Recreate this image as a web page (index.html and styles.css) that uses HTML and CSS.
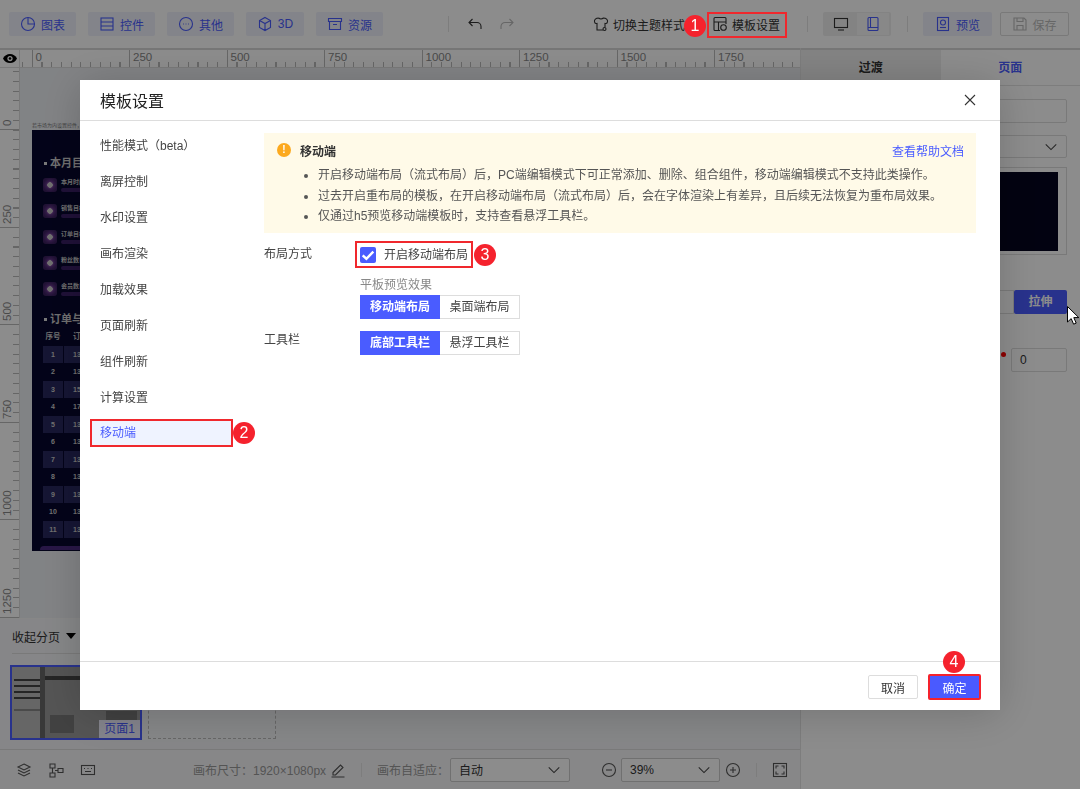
FILE: index.html
```html
<!DOCTYPE html>
<html lang="en">
<head>
    <meta charset="UTF-8">
    <meta name="viewport" content="width=device-width, initial-scale=1.0">
    <title>模板设置</title>
    <link rel="stylesheet" href="styles.css">
</head>
<body>
    <div class="app">
        <div class="toolbar">
            <div class="tool-group">
                <button class="tool-btn"><svg class="ico" viewBox="0 0 16 16"><circle cx="8" cy="8" r="6.5"/><path d="M8 1.5V8h6.5"/></svg>图表</button>
                <button class="tool-btn"><svg class="ico" viewBox="0 0 16 16"><rect x="2" y="2" width="12" height="12"/><path d="M2 6h12M2 10h12"/></svg>控件</button>
                <button class="tool-btn"><svg class="ico" viewBox="0 0 16 16"><circle cx="8" cy="8" r="6.5"/><path d="M5 8h.8M7.6 8h.8M10.2 8h.8"/></svg>其他</button>
                <button class="tool-btn"><svg class="ico" viewBox="0 0 16 16"><path d="M8 1.5l5.5 3v7L8 14.5l-5.500-3v-7zM2.500 4.500L8 7.500l5.500-3M8 7.500v7"/></svg>3D</button>
                <button class="tool-btn"><svg class="ico" viewBox="0 0 16 16"><path d="M1.500 2.500h13v3h-13zM2.500 5.500v8h11v-8M6 8.500h4"/></svg>资源</button>
            </div>
            <span class="tool-sep sep-history"></span>
            <svg class="ico history" viewBox="0 0 16 16"><path d="M5.500 3L2 6.500 5.500 10M2 6.500h8a4 4 0 0 1 4 4V13"/></svg>
            <svg class="ico history redo" viewBox="0 0 16 16"><path d="M10.500 3L14 6.500 10.500 10M14 6.500H6a4 4 0 0 0-4 4V13"/></svg>
            <div class="tool-link theme-link"><svg class="ico" viewBox="0 0 16 16"><path d="M5.500 2C3 2 1 3.800 1.500 5.800c.3 1.200 1.500 1.900 2.500 1.700v6.500h6M5.500 2c1.300 1 3.700 1 5 0 2.500 0 4.500 1.800 4 3.800-.3 1.200-1.500 1.900-2.500 1.700V11"/><circle cx="11.500" cy="13" r="1.500"/></svg>切换主题样式</div>
            <div class="tool-link template-link"><svg class="ico" viewBox="0 0 16 16"><path d="M14 8V2.500a1 1 0 0 0-1-1H3a1 1 0 0 0-1 1v11a1 1 0 0 0 1 1h5M2 6h12M6.500 6v8.500"/><circle cx="11.500" cy="11.500" r="2.800"/></svg>模板设置</div>
            <span class="tool-sep"></span>
            <div class="device-switch">
                <span class="device"><svg class="ico dark" viewBox="0 0 16 16"><rect x="1.500" y="2.500" width="13" height="9"/><path d="M5 14h6" /></svg></span>
                <span class="device active"><svg class="ico" viewBox="0 0 16 16"><rect x="3" y="1.500" width="10" height="13" rx="1"/><path d="M3 11.500h10M5.500 1.500v10"/></svg></span>
            </div>
            <span class="tool-sep"></span>
            <button class="tool-btn preview-btn"><svg class="ico" viewBox="0 0 16 16"><rect x="2.500" y="1.500" width="11" height="13"/><circle cx="8" cy="6.500" r="2.500"/><path d="M5 11.500h6"/></svg>预览</button>
            <button class="save-btn"><svg class="ico" viewBox="0 0 16 16"><path d="M2 2h10l2 2v10H2zM5 2v3.500h6V2M5 14V9.500h6V14"/></svg>保存</button>
        </div>

        <div class="main">
            <div class="editor">
                <div class="ruler-top">
                    <span class="ruler-corner"><svg viewBox="0 0 16 12" width="14" height="11"><path d="M0 6c3-7 13-7 16 0-3 7-13 7-16 0z" fill="#000"/><circle cx="8" cy="6" r="3" fill="#fff"/><circle cx="8" cy="6" r="1.500" fill="#000"/></svg></span>
                    <div class="ruler-scale">
                        <span class="mark">0</span><span class="mark">250</span><span class="mark">500</span><span class="mark">750</span><span class="mark">1000</span><span class="mark">1250</span><span class="mark">1500</span><span class="mark">1750</span>
                    </div>
                </div>
                <div class="workspace">
                    <div class="ruler-left">
                        <span class="mark-v">0</span><span class="mark-v">250</span><span class="mark-v">500</span><span class="mark-v">750</span><span class="mark-v">1000</span><span class="mark-v">1250</span>
                    </div>
                    <div class="stage">
                        <div class="stage-tip">若市场为内设置控件，即可查看</div>
                        <div class="board">
                            <div class="board-title">本月目标完成情况</div>
                            <div class="goal"><span class="goal-icon"></span><div class="goal-body"><span>本月时间进度</span><i></i></div></div>
                            <div class="goal"><span class="goal-icon"></span><div class="goal-body"><span>销售目标完成</span><i></i></div></div>
                            <div class="goal"><span class="goal-icon"></span><div class="goal-body"><span>订单目标完成</span><i></i></div></div>
                            <div class="goal"><span class="goal-icon"></span><div class="goal-body"><span>粉丝数目标</span><i></i></div></div>
                            <div class="goal"><span class="goal-icon"></span><div class="goal-body"><span>会员数目标</span><i></i></div></div>
                            <div class="board-title second">订单与会员</div>
                            <div class="table-head"><span class="col-no">序号</span><span>订单</span></div>
                            <div class="table-row odd"><span class="col-no">1</span><span>13</span></div>
                            <div class="table-row"><span class="col-no">2</span><span>13</span></div>
                            <div class="table-row odd"><span class="col-no">3</span><span>15</span></div>
                            <div class="table-row"><span class="col-no">4</span><span>17</span></div>
                            <div class="table-row odd"><span class="col-no">5</span><span>13</span></div>
                            <div class="table-row"><span class="col-no">6</span><span>13</span></div>
                            <div class="table-row odd"><span class="col-no">7</span><span>13</span></div>
                            <div class="table-row"><span class="col-no">8</span><span>13</span></div>
                            <div class="table-row odd"><span class="col-no">9</span><span>13</span></div>
                            <div class="table-row"><span class="col-no">10</span><span>13</span></div>
                            <div class="table-row odd"><span class="col-no">11</span><span>13</span></div>
                            <div class="board-foot"></div>
                        </div>
                    </div>
                </div>
                <div class="pages">
                    <div class="pages-head">收起分页<span class="caret"></span></div>
                    <div class="pages-list">
                        <div class="thumb">
                            <div class="thumb-side"><i></i><i></i><i></i><i></i><i class="pale"></i></div>
                            <div class="thumb-gap"></div>
                            <div class="thumb-main"><i></i></div>
                            <span class="thumb-block block-a"></span>
                            <span class="thumb-block block-b"></span>
                            <span class="thumb-label">页面1</span>
                        </div>
                        <div class="thumb-add"></div>
                    </div>
                </div>
                <div class="statusbar">
                    <svg class="ico gray" viewBox="0 0 16 16"><path d="M8 2l6 3-6 3-6-3zM2 8l6 3 6-3M2 11l6 3 6-3"/></svg>
                    <svg class="ico gray" viewBox="0 0 16 16"><path d="M2 2h5v4H2zM2 11h5v4H2zM10 6.500h5v4h-5zM4.500 6v5M7 8.500h3"/></svg>
                    <svg class="ico gray" viewBox="0 0 16 16"><rect x="1.500" y="3.500" width="13" height="9"/><path d="M4 6.500h1M7.500 6.500h1M11 6.500h1M5 9.500h6"/></svg>
                    <span class="canvas-size">画布尺寸：1920×1080px</span>
                    <svg class="ico gray pencil" viewBox="0 0 16 16"><path d="M3 10.500L10.500 3l2.500 2.500L5.500 13H3zM1.500 15h13"/></svg>
                    <span class="tool-sep small"></span>
                    <span class="fit-label">画布自适应：</span>
                    <div class="select fit-select"><span>自动</span><svg class="chev" viewBox="0 0 16 16"><path d="M2 5l6 6 6-6"/></svg></div>
                    <svg class="ico gray minus" viewBox="0 0 16 16"><circle cx="8" cy="8" r="6.500"/><path d="M5 8h6"/></svg>
                    <div class="select zoom-select"><span>39%</span><svg class="chev" viewBox="0 0 16 16"><path d="M2 5l6 6 6-6"/></svg></div>
                    <svg class="ico gray plus" viewBox="0 0 16 16"><circle cx="8" cy="8" r="6.500"/><path d="M5 8h6M8 5v6"/></svg>
                    <span class="tool-sep small"></span>
                    <svg class="ico gray" viewBox="0 0 16 16"><rect x="1.500" y="1.500" width="13" height="13"/><path d="M4 6.500V4h2.500M9.500 4H12v2.500M12 9.500V12H9.500M6.500 12H4V9.500"/></svg>
                </div>
            </div>

            <div class="side">
                <div class="side-tabs"><span class="side-tab">过渡</span><span class="side-tab on">页面</span></div>
                <div class="side-body">
                    <div class="side-input"></div>
                    <div class="side-select"><svg class="chev" viewBox="0 0 16 16"><path d="M2 5l6 6 6-6"/></svg></div>
                    <div class="side-preview"><div class="side-preview-in"></div></div>
                    <div class="side-stretch"><span class="stretch-off"></span><span class="stretch-on">拉伸</span></div>
                    <div class="side-num"><i class="red-dot"></i><span class="num-box">0</span></div>
                </div>
            </div>
        </div>
    </div>

    <div class="mask"></div>

    <div class="modal">
        <div class="modal-head">
            <h2>模板设置</h2>
            <svg class="close" viewBox="0 0 12 12"><path d="M1 1l10 10M11 1L1 11"/></svg>
        </div>
        <div class="modal-body">
            <ul class="menu">
                <li>性能模式（beta）</li>
                <li>离屏控制</li>
                <li>水印设置</li>
                <li>画布渲染</li>
                <li>加载效果</li>
                <li>页面刷新</li>
                <li>组件刷新</li>
                <li>计算设置</li>
                <li class="current">移动端</li>
            </ul>
            <div class="content">
                <div class="notice">
                    <div class="notice-head">
                        <span class="notice-icon">!</span>
                        <span class="notice-title">移动端</span>
                        <a class="notice-link">查看帮助文档</a>
                    </div>
                    <ul class="notice-list">
                        <li>开启移动端布局（流式布局）后，PC端编辑模式下可正常添加、删除、组合组件，移动端编辑模式不支持此类操作。</li>
                        <li>过去开启重布局的模板，在开启移动端布局（流式布局）后，会在字体渲染上有差异，且后续无法恢复为重布局效果。</li>
                        <li>仅通过h5预览移动端模板时，支持查看悬浮工具栏。</li>
                    </ul>
                </div>
                <div class="form-row layout-row">
                    <span class="form-label">布局方式</span>
                    <div class="form-value">
                        <label class="check"><span class="check-box"><svg viewBox="0 0 12 12"><path d="M2 6.200l2.800 2.600L10 3.500"/></svg></span>开启移动端布局</label>
                        <div class="sub-label">平板预览效果</div>
                        <div class="seg"><span class="seg-item on">移动端布局</span><span class="seg-item">桌面端布局</span></div>
                    </div>
                </div>
                <div class="form-row toolbar-row">
                    <span class="form-label">工具栏</span>
                    <div class="form-value">
                        <div class="seg"><span class="seg-item on">底部工具栏</span><span class="seg-item">悬浮工具栏</span></div>
                    </div>
                </div>
            </div>
        </div>
        <div class="modal-foot">
            <button class="btn">取消</button>
            <button class="btn primary">确定</button>
        </div>
    </div>

    <!-- annotations drawn over the screenshot -->
    <div class="mark-box box-1"></div>
    <div class="mark-box box-2"></div>
    <div class="mark-box box-3"></div>
    <span class="badge badge-1">1</span>
    <span class="badge badge-2">2</span>
    <span class="badge badge-3">3</span>
    <span class="badge badge-4">4</span>
    <svg class="cursor" viewBox="0 0 12 19"><path d="M.5.500v15.500l3.700-3.400 2.400 5.600 2.600-1.100-2.400-5.500h5z" fill="#fff" stroke="#000"/></svg>
</body>
</html>
```

FILE: styles.css
```css
* {
    box-sizing: border-box;
}

body {
    margin: 0;
    height: 789px;
    overflow: hidden;
    font-family: "Liberation Sans", "Noto Sans CJK SC", sans-serif;
    font-size: 12px;
    color: #333;
    background: #fff;
}

.app {
    height: 789px;
    display: flex;
    flex-direction: column;
}

/* top toolbar */
.toolbar {
    height: 48px;
    padding: 0 0 0 9px;
    display: flex;
    align-items: center;
    background: #fff;
    flex: none;
}

.tool-group {
    display: flex;
    gap: 12px;
}

.tool-btn {
    height: 24px;
    width: 67px;
    padding: 0;
    border: none;
    border-radius: 2px;
    background: #eef0fb;
    color: #4a5cff;
    font: inherit;
    display: flex;
    align-items: center;
    justify-content: center;
    gap: 5px;
}

.tool-group .tool-btn:nth-child(4) {
    width: 58px;
}

.ico {
    width: 16px;
    height: 16px;
    flex: none;
    fill: none;
    stroke: #4a5cff;
    stroke-width: 1.1;
}

.ico.dark,
.toolbar .tool-link .ico {
    stroke: #333;
}

.ico.gray {
    stroke: #555;
}

.tool-sep {
    width: 1px;
    height: 16px;
    background: #e3e3e3;
    flex: none;
}

.tool-sep.small {
    height: 14px;
}

.sep-history {
    margin-left: 65px;
}

.history {
    stroke: #333;
    margin-left: 18px;
}

.history.redo {
    stroke: #bbb;
    margin-left: 16px;
}

.tool-link {
    display: flex;
    align-items: center;
    gap: 4px;
    color: #333;
}

.theme-link {
    margin-left: 78px;
    width: 106px;
}

.template-link {
    margin-left: 13px;
    width: 75px;
    margin-right: 20px;
}

.device-switch {
    margin-left: 15px;
    width: 68px;
    height: 24px;
    padding: 0 2px;
    background: #eee;
    border-radius: 2px;
    display: flex;
    align-items: center;
}

.device {
    width: 32px;
    height: 22px;
    display: flex;
    align-items: center;
    justify-content: center;
}

.device.active {
    background: #f8f8f8;
}

.device-switch + .tool-sep {
    margin-left: 16px;
}

.preview-btn {
    margin-left: 15px;
    width: 69px;
}

.save-btn {
    margin-left: 8px;
    width: 69px;
    height: 24px;
    padding: 0;
    border: 1px solid #ddd;
    border-radius: 2px;
    background: #fff;
    color: #bbb;
    font: inherit;
    display: flex;
    align-items: center;
    justify-content: center;
    gap: 4px;
}

.save-btn .ico {
    stroke: #bbb;
}

/* main area */
.main {
    flex: 1;
    display: flex;
    min-height: 0;
}

.editor {
    width: 800px;
    display: flex;
    flex-direction: column;
    flex: none;
}

.ruler-top {
    height: 20px;
    display: flex;
    border-top: 2px solid #d8d8d8;
    background: #fff;
    flex: none;
}

.ruler-corner {
    width: 20px;
    display: flex;
    align-items: center;
    justify-content: center;
    background: #fff;
    border-bottom: 1px solid #ddd;
    border-right: 1px solid #ddd;
}

.ruler-scale {
    flex: 1;
    display: flex;
    padding-left: 11.500px;
    overflow: hidden;
    border-bottom: 1px solid #ddd;
    background:
        repeating-linear-gradient(90deg, #bbb 0, #bbb 1px, transparent 1px, transparent 9.750px) 1.750px 100% / 100% 5px no-repeat;
}

.mark {
    width: 97.500px;
    flex: none;
    padding-left: 3px;
    font-size: 11.500px;
    line-height: 14px;
    color: #888;
    border-left: 1px solid #bbb;
}

.workspace {
    flex: 1;
    display: flex;
    min-height: 0;
}

.ruler-left {
    width: 20px;
    flex: none;
    padding-top: 62px;
    overflow: hidden;
    border-right: 1px solid #ddd;
    background:
        repeating-linear-gradient(180deg, #bbb 0, #bbb 1px, transparent 1px, transparent 9.750px) 100% 3px / 6px 100% no-repeat,
        #fff;
}

.mark-v {
    display: block;
    width: 19px;
    height: 97.500px;
    padding-top: 3px;
    border-top: 1px solid #bbb;
    font-size: 11.500px;
    line-height: 14px;
    color: #888;
    writing-mode: vertical-rl;
    transform: rotate(180deg);
    transform-origin: 50% 0;
}

.stage {
    flex: 1;
    min-width: 0;
    padding: 52px 0 0 12px;
    background: #eceef2;
    overflow: hidden;
}

.stage-tip {
    height: 10px;
    font-size: 5px;
    line-height: 10px;
    color: #777;
    white-space: nowrap;
}

.board {
    width: 749px;
    height: 421px;
    padding: 26px 0 0 11px;
    background: #07072e;
    color: #ccc;
    font-size: 6px;
    overflow: hidden;
}

.board-title {
    height: 14px;
    line-height: 14px;
    font-size: 11px;
    font-weight: bold;
    padding-left: 7px;
    margin-bottom: 8px;
    white-space: nowrap;
    position: relative;
}

.board-title::before {
    content: "";
    position: absolute;
    left: 1px;
    top: 6px;
    width: 3px;
    height: 3px;
    background: #ddd;
}

.board-title.second {
    margin-top: 4px;
    margin-bottom: 2px;
}

.goal {
    height: 26px;
    display: flex;
    gap: 4px;
    font-weight: bold;
}

.goal-icon {
    width: 14px;
    height: 14px;
    border-radius: 3px;
    background: radial-gradient(circle, #ccc 0, #ccc 2.500px, #7a4a9a 3px, #5a2f80 4px, #3c2060 7px);
}

.goal-body {
    width: 300px;
    display: flex;
    flex-direction: column;
    line-height: 8px;
}

.goal-body i {
    width: 200px;
    height: 4px;
    margin-top: 2px;
    border-radius: 2px;
    background: #3a1f66;
}

.table-head,
.table-row {
    height: 17.500px;
    line-height: 17.500px;
    display: flex;
    font-size: 7px;
    font-weight: bold;
    width: 730px;
}

.table-head {
    font-size: 7.500px;
}

.table-row.odd {
    background: #28285f;
}

.col-no {
    width: 21px;
    text-align: center;
    border-right: 1px solid #07072e;
    margin-right: 9px;
}

.board-foot {
    width: 720px;
    height: 4px;
    margin: 8px 0 0 -3px;
    border-radius: 4px 4px 0 0;
    background: #4a2a80;
}

/* page strip */
.pages {
    height: 131px;
    padding: 0 12px;
    border-top: 1px solid #f6f6f6;
    background: #f4f5f8;
    flex: none;
}

.pages-head {
    height: 35px;
    display: flex;
    align-items: center;
    gap: 6px;
    border-bottom: 1px solid #ddd;
    color: #333;
}

.caret {
    width: 0;
    height: 0;
    border-left: 5.500px solid transparent;
    border-right: 5.500px solid transparent;
    border-top: 6px solid #000;
}

.pages-list {
    display: flex;
    gap: 6px;
    padding-top: 11px;
    margin-left: -2px;
}

.thumb {
    width: 132px;
    height: 75px;
    border: 2px solid #4a5cff;
    display: flex;
    background: #999;
    position: relative;
}

.thumb-side {
    width: 28px;
    padding-top: 12px;
    background: #bbb;
    display: flex;
    flex-direction: column;
    gap: 4px;
}

.thumb-side i {
    height: 2px;
    margin-left: 2px;
    background: #444;
}

.thumb-side i.pale {
    margin-top: 6px;
    background: #888;
}

.thumb-gap {
    width: 5px;
    background: #666;
}

.thumb-main {
    flex: 1;
    padding-top: 9px;
    background: #9a9a9a;
}

.thumb-main i {
    display: block;
    height: 4px;
    background: #444;
}

.thumb-block {
    position: absolute;
    background: #777;
}

.block-a {
    left: 38px;
    top: 48px;
    width: 24px;
    height: 18px;
}

.block-b {
    right: 3px;
    top: 44px;
    width: 31px;
    height: 9px;
}

.thumb-label {
    position: absolute;
    right: 0;
    bottom: 0;
    width: 41px;
    height: 18px;
    background: #f0f0ff;
    color: #4a5cff;
    line-height: 18px;
    text-align: center;
}

.thumb-add {
    width: 128px;
    height: 74px;
    border: 1px dashed #bbb;
}

/* bottom bar */
.statusbar {
    height: 40px;
    padding: 0 0 0 16px;
    display: flex;
    align-items: center;
    border-top: 1px solid #ddd;
    background: #f6f6f8;
    flex: none;
    color: #999;
}

.statusbar > .ico + .ico {
    margin-left: 16px;
}

.canvas-size {
    margin-left: 97px;
    width: 135px;
    white-space: nowrap;
}

.pencil {
    margin-left: 2px;
}

.statusbar .tool-sep {
    margin-left: 15px;
}

.fit-label {
    margin-left: 15px;
    width: 73px;
    white-space: nowrap;
}

.select {
    height: 24px;
    padding: 0 8px;
    display: flex;
    align-items: center;
    justify-content: space-between;
    border: 1px solid #ccc;
    border-radius: 2px;
    background: #fff;
    color: #333;
}

.fit-select {
    width: 120px;
}

.minus {
    margin-left: 31px;
}

.zoom-select {
    width: 99px;
    margin-left: 4px;
}

.plus {
    margin-left: 5px;
}

.statusbar .plus + .tool-sep {
    margin-left: 15px;
}

.statusbar .tool-sep + .ico:last-child {
    margin-left: 15px;
}

.chev {
    width: 14px;
    height: 14px;
    fill: none;
    stroke: #444;
    stroke-width: 1.2;
}

/* right panel */
.side {
    flex: 1;
    border-left: 1px solid #e3e3e3;
    background: #fff;
}

.side-tabs {
    height: 38px;
    display: flex;
    padding-bottom: 0;
    border-top: 2px solid #d8d8d8;
    border-bottom: 1px solid #e3e3e3;
    font-weight: bold;
}

.side-tab {
    width: 50%;
    padding-bottom: 3px;
    display: flex;
    align-items: center;
    justify-content: center;
    background: #eee;
    color: #333;
}

.side-tab.on {
    background: #fff;
    color: #4a5cff;
}

.side-body {
    padding: 13px 13px 0 8px;
    display: flex;
    flex-direction: column;
}

.side-input {
    height: 24px;
    border: 1px solid #ddd;
    border-radius: 2px;
}

.side-select {
    height: 23px;
    margin-top: 12px;
    padding-right: 8px;
    border: 1px solid #ddd;
    border-radius: 2px;
    display: flex;
    align-items: center;
    justify-content: flex-end;
}

.side-preview {
    height: 88px;
    margin-top: 9px;
    padding: 4px 8px 3px 0;
    border: 1px solid #ddd;
}

.side-preview-in {
    height: 100%;
    background: #05051f;
}

.side-stretch {
    margin-top: 35px;
    height: 24px;
    display: flex;
}

.stretch-off {
    flex: 1;
    border: 1px solid #ddd;
}

.stretch-on {
    width: 53px;
    background: #4a5cff;
    color: #fff;
    font-weight: bold;
    text-align: center;
    line-height: 24px;
    border-radius: 2px;
}

.side-num {
    margin-top: 34px;
    display: flex;
    justify-content: flex-end;
    position: relative;
}

.red-dot {
    position: absolute;
    left: 192px;
    top: 4px;
    width: 5px;
    height: 5px;
    background: #f00;
    border-radius: 50%;
}

.num-box {
    width: 56px;
    height: 24px;
    padding-left: 8px;
    line-height: 22px;
    border: 1px solid #ddd;
    border-radius: 2px;
}

/* dialog */
.mask {
    position: fixed;
    inset: 0;
    background: rgba(0, 0, 0, 0.45);
}

.modal {
    position: fixed;
    left: 80px;
    top: 80px;
    width: 920px;
    height: 630px;
    display: flex;
    flex-direction: column;
    background: #fff;
    box-shadow: 0 4px 40px rgba(0, 0, 0, 0.18);
}

.modal-head {
    height: 41px;
    padding: 0 24px 0 20px;
    display: flex;
    align-items: center;
    justify-content: space-between;
    border-bottom: 1px solid #ddd;
    flex: none;
}

.modal-head h2 {
    margin: 0;
    font-size: 16px;
    font-weight: normal;
    color: #222;
}

.close {
    width: 12px;
    height: 12px;
    fill: none;
    stroke: #333;
    stroke-width: 1.1;
}

.modal-body {
    flex: 1;
    display: flex;
    min-height: 0;
}

.menu {
    width: 184px;
    margin: 0;
    padding: 7px 0 0;
    list-style: none;
    flex: none;
    color: #444;
}

.menu li {
    height: 36px;
    padding: 0 0 0 20px;
    line-height: 36px;
}

.menu li.current {
    height: 28px;
    margin: 3px 32px 0 10px;
    padding-left: 10px;
    line-height: 28px;
    color: #4a5cff;
    background: #eff3ff;
}

.content {
    flex: 1;
    padding: 12px 24px 0 0;
    min-width: 0;
}

.notice {
    height: 100px;
    padding: 8px 12px 0 13px;
    background: #fffae8;
}

.notice-head {
    height: 18px;
    display: flex;
    align-items: center;
}

.notice-icon {
    width: 14px;
    height: 14px;
    border-radius: 50%;
    background: #fca91e;
    color: #fff;
    font-size: 10px;
    font-weight: bold;
    line-height: 14px;
    text-align: center;
}

.notice-title {
    margin-left: 9px;
    font-weight: bold;
    color: #333;
}

.notice-link {
    margin-left: auto;
    color: #4a5cff;
}

.notice-list {
    margin: 6px 0 0;
    padding: 0 0 0 41px;
    color: #555;
    line-height: 20.500px;
}

.form-row {
    display: flex;
}

.form-label {
    width: 96px;
    flex: none;
    color: #444;
}

.layout-row {
    margin-top: 14px;
    line-height: 15px;
}

.toolbar-row {
    margin-top: 12px;
    line-height: 18px;
}

.check {
    height: 16px;
    display: flex;
    align-items: center;
    gap: 8px;
    color: #444;
}

.check-box {
    width: 16px;
    height: 16px;
    border-radius: 2px;
    background: #4a5cff;
}

.check-box svg {
    display: block;
    fill: none;
    stroke: #fff;
    stroke-width: 1.800;
}

.sub-label {
    margin: 14px 0 2px;
    line-height: 16px;
    color: #888;
}

.seg {
    display: flex;
    height: 24px;
}

.seg-item {
    width: 80px;
    line-height: 22px;
    text-align: center;
    border: 1px solid #ddd;
    border-left: none;
    color: #444;
}

.seg-item.on {
    line-height: 24px;
    border: none;
    background: #4a5cff;
    color: #fff;
    font-weight: bold;
}

.modal-foot {
    height: 49px;
    padding: 12px 19px 0 0;
    display: flex;
    justify-content: flex-end;
    align-items: flex-start;
    gap: 10px;
    border-top: 1px solid #ddd;
    flex: none;
}

.btn {
    width: 50px;
    height: 24px;
    padding: 0;
    border: 1px solid #ddd;
    border-radius: 2px;
    background: #fff;
    color: #333;
    font: inherit;
    margin-top: 1px;
}

.btn.primary {
    width: 53px;
    height: 26px;
    margin-top: 0;
    border: 2px solid #f5222d;
    background: #4a5aff;
    color: #fff;
}

/* annotations */
.mark-box {
    position: fixed;
    border: 2px solid #f0282d;
}

.box-1 {
    left: 707px;
    top: 12px;
    width: 80px;
    height: 26px;
}

.box-2 {
    left: 90px;
    top: 419px;
    width: 143px;
    height: 28px;
}

.box-3 {
    left: 355px;
    top: 241px;
    width: 118px;
    height: 27px;
}

.badge {
    position: fixed;
    width: 22px;
    height: 22px;
    border-radius: 50%;
    background: #f5222d;
    color: #fff;
    font-size: 16px;
    line-height: 22px;
    text-align: center;
}

.badge-1 {
    left: 684px;
    top: 15px;
}

.badge-2 {
    left: 233px;
    top: 422px;
}

.badge-3 {
    left: 474px;
    top: 244px;
}

.badge-4 {
    left: 943px;
    top: 651px;
}

.cursor {
    position: fixed;
    left: 1067px;
    top: 306px;
    width: 12px;
    height: 19px;
}
```
